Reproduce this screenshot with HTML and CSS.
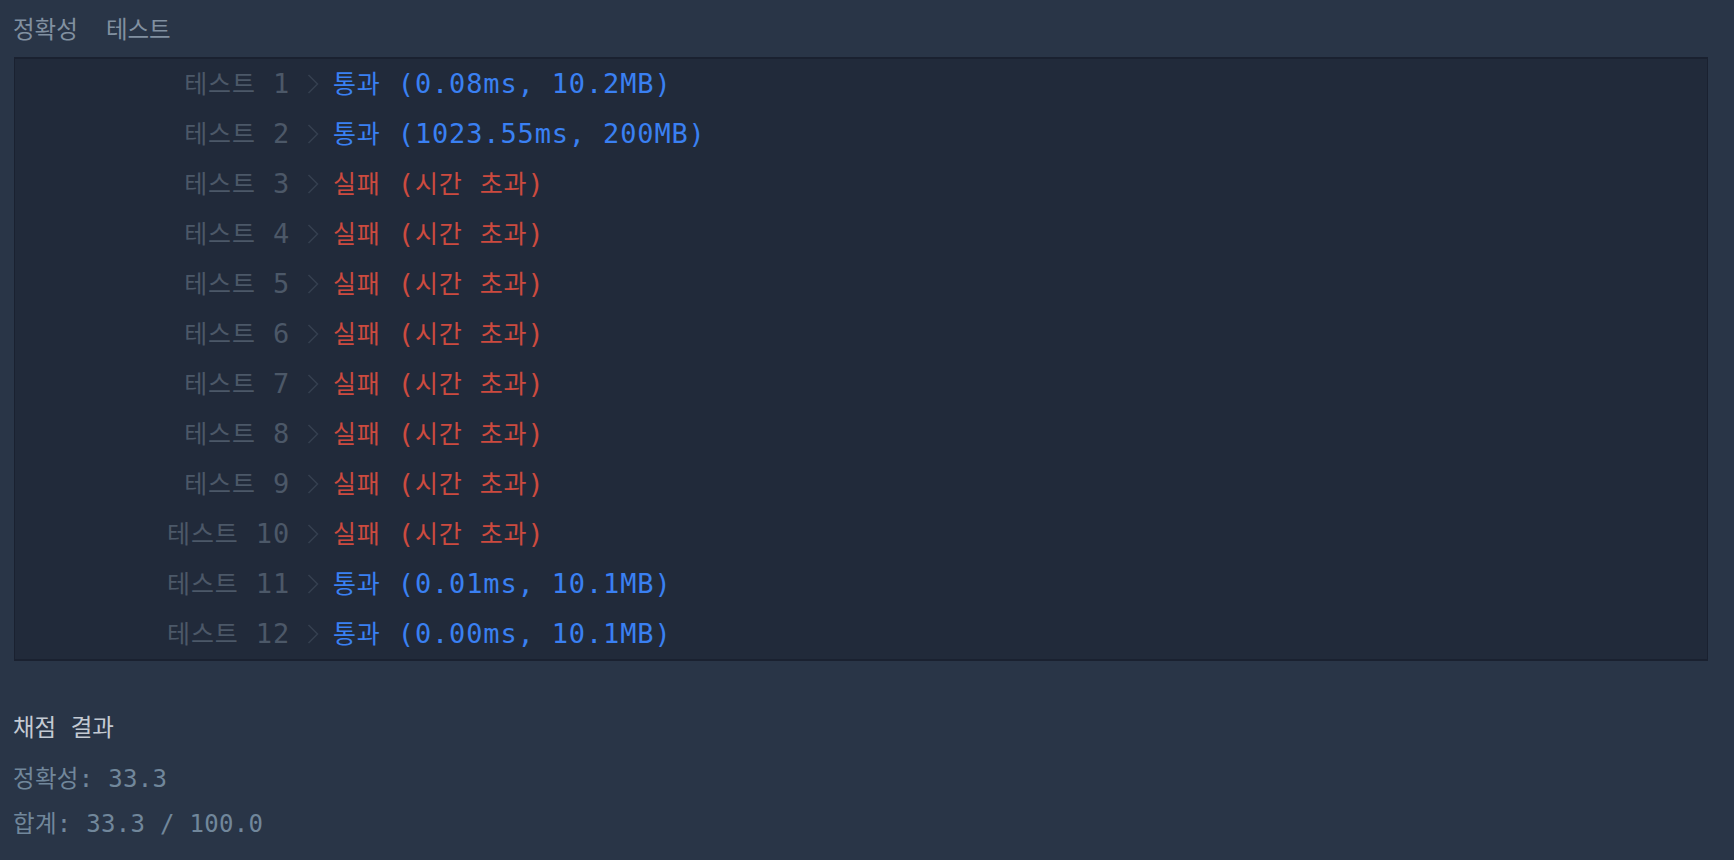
FILE: index.html
```html
<!DOCTYPE html>
<html lang="ko">
<head>
<meta charset="utf-8">
<title>정확성 테스트</title>
<link rel="stylesheet" href="styles.css">
</head>
<body>
<div class="page">
  <div class="header">
    <span class="ko">정확성</span>
    <span class="ko">테스트</span>
  </div>

  <div class="results">
    <div class="row"><span class="label"><span class="ko">테스트</span> 1</span><svg class="chev" viewBox="0 0 12 20" width="12" height="20"><polyline points="1.5,1 10.5,10 1.5,19"/></svg><span class="res pass"><span class="ko">통과</span> (0.08ms, 10.2MB)</span></div>
    <div class="row"><span class="label"><span class="ko">테스트</span> 2</span><svg class="chev" viewBox="0 0 12 20" width="12" height="20"><polyline points="1.5,1 10.5,10 1.5,19"/></svg><span class="res pass"><span class="ko">통과</span> (1023.55ms, 200MB)</span></div>
    <div class="row"><span class="label"><span class="ko">테스트</span> 3</span><svg class="chev" viewBox="0 0 12 20" width="12" height="20"><polyline points="1.5,1 10.5,10 1.5,19"/></svg><span class="res fail"><span class="ko">실패</span> (<span class="ko">시간</span> <span class="ko">초과</span>)</span></div>
    <div class="row"><span class="label"><span class="ko">테스트</span> 4</span><svg class="chev" viewBox="0 0 12 20" width="12" height="20"><polyline points="1.5,1 10.5,10 1.5,19"/></svg><span class="res fail"><span class="ko">실패</span> (<span class="ko">시간</span> <span class="ko">초과</span>)</span></div>
    <div class="row"><span class="label"><span class="ko">테스트</span> 5</span><svg class="chev" viewBox="0 0 12 20" width="12" height="20"><polyline points="1.5,1 10.5,10 1.5,19"/></svg><span class="res fail"><span class="ko">실패</span> (<span class="ko">시간</span> <span class="ko">초과</span>)</span></div>
    <div class="row"><span class="label"><span class="ko">테스트</span> 6</span><svg class="chev" viewBox="0 0 12 20" width="12" height="20"><polyline points="1.5,1 10.5,10 1.5,19"/></svg><span class="res fail"><span class="ko">실패</span> (<span class="ko">시간</span> <span class="ko">초과</span>)</span></div>
    <div class="row"><span class="label"><span class="ko">테스트</span> 7</span><svg class="chev" viewBox="0 0 12 20" width="12" height="20"><polyline points="1.5,1 10.5,10 1.5,19"/></svg><span class="res fail"><span class="ko">실패</span> (<span class="ko">시간</span> <span class="ko">초과</span>)</span></div>
    <div class="row"><span class="label"><span class="ko">테스트</span> 8</span><svg class="chev" viewBox="0 0 12 20" width="12" height="20"><polyline points="1.5,1 10.5,10 1.5,19"/></svg><span class="res fail"><span class="ko">실패</span> (<span class="ko">시간</span> <span class="ko">초과</span>)</span></div>
    <div class="row"><span class="label"><span class="ko">테스트</span> 9</span><svg class="chev" viewBox="0 0 12 20" width="12" height="20"><polyline points="1.5,1 10.5,10 1.5,19"/></svg><span class="res fail"><span class="ko">실패</span> (<span class="ko">시간</span> <span class="ko">초과</span>)</span></div>
    <div class="row"><span class="label"><span class="ko">테스트</span> 10</span><svg class="chev" viewBox="0 0 12 20" width="12" height="20"><polyline points="1.5,1 10.5,10 1.5,19"/></svg><span class="res fail"><span class="ko">실패</span> (<span class="ko">시간</span> <span class="ko">초과</span>)</span></div>
    <div class="row"><span class="label"><span class="ko">테스트</span> 11</span><svg class="chev" viewBox="0 0 12 20" width="12" height="20"><polyline points="1.5,1 10.5,10 1.5,19"/></svg><span class="res pass"><span class="ko">통과</span> (0.01ms, 10.1MB)</span></div>
    <div class="row"><span class="label"><span class="ko">테스트</span> 12</span><svg class="chev" viewBox="0 0 12 20" width="12" height="20"><polyline points="1.5,1 10.5,10 1.5,19"/></svg><span class="res pass"><span class="ko">통과</span> (0.00ms, 10.1MB)</span></div>
  </div>

  <div class="summary">
    <div class="title"><span class="ko">채점</span> <span class="ko">결과</span></div>
    <div class="stats">
      <div class="stat"><span class="ko">정확성</span>: 33.3</div>
      <div class="stat"><span class="ko">합계</span>: 33.3 / 100.0</div>
    </div>
  </div>
</div>
</body>
</html>
```

FILE: styles.css
```css
html, body {
  margin: 0;
  padding: 0;
  background: #293547;
}

body {
  font-family: "DejaVu Sans Mono", "Noto Sans CJK KR", monospace;
  font-size: 24px;
  color: #8190a0;
  height: 860px;
  overflow: hidden;
}

.ko {
  font-family: "Noto Sans CJK KR", sans-serif;
  font-size: 23.5px;
  line-height: 1;
}

.page {
  padding: 0 26px 0 13px;
}

.header {
  box-sizing: border-box;
  height: 57px;
  display: flex;
  align-items: center;
  gap: 28px;
  color: #8190a0;
}

.results {
  margin-left: 1px;
  background: #212a3a;
  border: 1px solid #1a2130;
  border-top-width: 2px;
  border-bottom-width: 2px;
}

.row {
  box-sizing: border-box;
  height: 50px;
  display: flex;
  align-items: center;
  font-size: 27px;
  line-height: 32px;
  letter-spacing: 0.85px;
  white-space: nowrap;
}

.row .ko {
  font-size: 25px;
}

.label {
  flex: 0 0 275px;
  text-align: right;
  color: #4c5868;
}

.chev {
  flex: 0 0 auto;
  margin: 0 14px 0 17px;
  fill: none;
  stroke: #354050;
  stroke-width: 1.5;
}

.pass {
  color: #3a80f2;
}

.fail {
  color: #cc4a3f;
}

.summary {
  margin-top: 44px;
}

.title {
  line-height: 46px;
  color: #c3cad3;
}

.stats {
  margin-top: 6px;
  color: #71879b;
  letter-spacing: 0.3px;
}

.stat {
  line-height: 45px;
}
```
